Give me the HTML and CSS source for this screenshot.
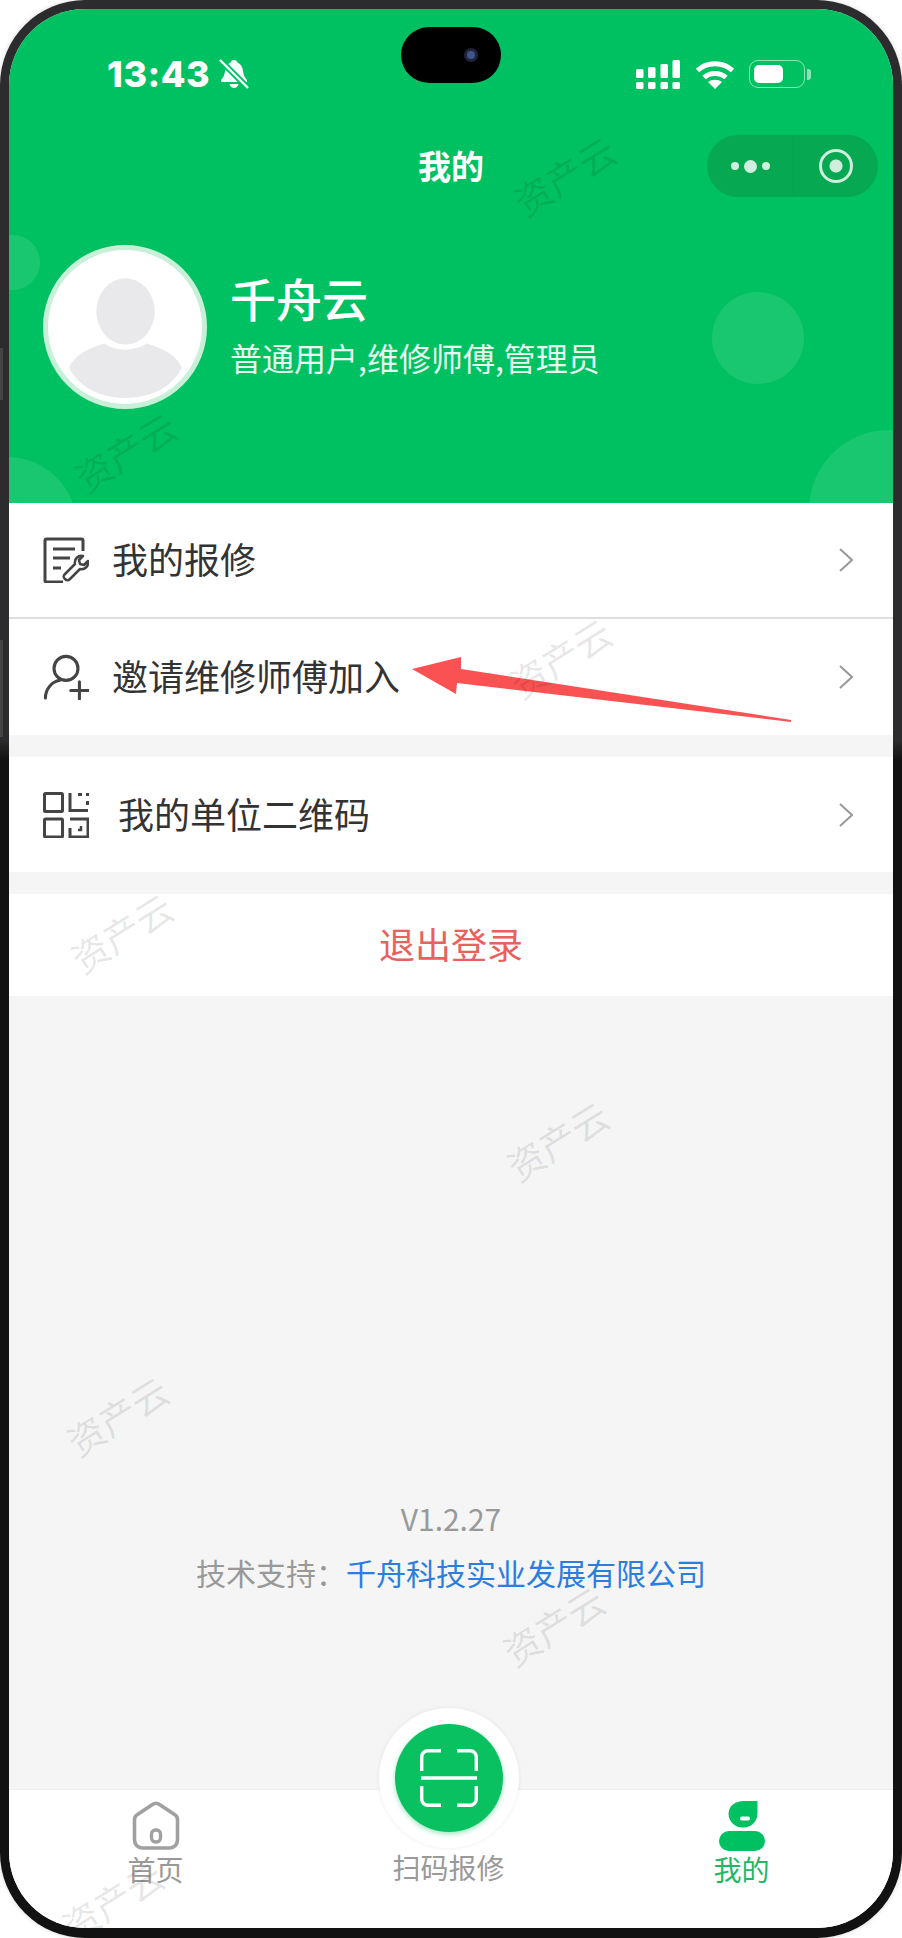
FILE: index.html
```html
<!DOCTYPE html>
<html lang="zh-CN">
<head>
    <meta charset="UTF-8">
    <meta name="viewport" content="width=device-width, initial-scale=1.0">
    <title>我的</title>
    <link rel="stylesheet" href="styles.css">
</head>
<body>

<div class="phone">
    <span class="side-key side-key-a"></span>
    <span class="side-key side-key-b"></span>

    <div class="screen">
        <header class="header">
            <span class="bubble bubble-a"></span>
            <span class="bubble bubble-b"></span>
            <span class="bubble bubble-c"></span>
            <span class="bubble bubble-d"></span>

            <div class="island"><span class="camera"></span></div>

            <div class="status-bar">
                <div class="status-left">
                    <span class="clock">13:43</span>
                    <svg class="bell" viewBox="0 0 30 30">
                        <path d="M15 1c2 0 3 1 3.500 2.500C22 5 23.500 8 24 12c.5 4 1.500 6 4 9v2H2v-2c2.500-3 3.500-5 4-9 .5-4 2-7 5.500-8.500C12 2 13 1 15 1z" fill="#fff"/>
                        <path d="M10.500 25h9c-.5 2.500-2.500 4-4.500 4s-4-1.500-4.500-4z" fill="#fff"/>
                        <path d="M1 1l28 28" stroke="#00c161" stroke-width="6"/>
                        <path d="M1 1l28 28" stroke="#fff" stroke-width="2.400"/>
                    </svg>
                </div>
                <div class="status-right">
                    <svg class="signal" viewBox="0 0 44 29" fill="#fff">
                        <rect x="0" y="9" width="7.500" height="9" rx="1.500"/>
                        <rect x="12" y="7" width="7.500" height="11" rx="1.500"/>
                        <rect x="24.500" y="4" width="7.500" height="14" rx="1.500"/>
                        <rect x="36.500" y="0" width="7.500" height="18" rx="1.500"/>
                        <rect x="0" y="22" width="7.500" height="7" rx="1.500"/>
                        <rect x="12" y="22" width="7.500" height="7" rx="1.500"/>
                        <rect x="24.500" y="22" width="7.500" height="7" rx="1.500"/>
                        <rect x="36.500" y="22" width="7.500" height="7" rx="1.500"/>
                    </svg>
                    <svg class="wifi" viewBox="0 0 40 30" fill="none" stroke="#fff" stroke-width="5">
                        <path d="M2.500 11.500C12 2.500 28 2.500 37.500 11.500"/>
                        <path d="M9 18.500c6-5.500 16-5.500 22 0"/>
                        <path d="M20 30l-7-7c4-3 10-3 14 0z" fill="#fff" stroke="none"/>
                    </svg>
                    <div class="battery">
                        <span class="battery-level"></span>
                    </div>
                    <span class="battery-nub"></span>
                </div>
            </div>

            <div class="nav">
                <h1 class="nav-title">我的</h1>
                <div class="capsule">
                    <div class="capsule-dots">
                        <span class="dot"></span>
                        <span class="dot dot-big"></span>
                        <span class="dot"></span>
                    </div>
                    <div class="capsule-close"><span></span></div>
                </div>
            </div>

            <div class="profile">
                <div class="avatar">
                    <svg viewBox="0 0 153 153" fill="#e9e9eb">
                        <ellipse cx="77" cy="61" rx="29" ry="33"/>
                        <path d="M21 117c6-14 22-20 35-24 12 8 30 8 42 0 13 4 29 10 35 24-10 20-32 30-56 30s-46-10-56-30z"/>
                    </svg>
                </div>
                <div class="profile-info">
                    <div class="profile-name">千舟云</div>
                    <div class="profile-role">普通用户,维修师傅,管理员</div>
                </div>
            </div>
        </header>

        <main class="main">
            <section class="card">
                <div class="row row-line">
                    <svg class="row-icon" viewBox="0 0 46 46" fill="none" stroke="#444" stroke-width="3">
                        <path d="M40 14V3.500A1.500 1.500 0 0 0 38.500 2H3.500A1.500 1.500 0 0 0 2 3.500v40A1.500 1.500 0 0 0 3.500 45H20"/>
                        <path d="M10 12h22M10 21h17M10 31h8"/>
                        <path d="M22 42c-2-2-2-3 0-5l10-10c-1-5 3-9 8-8l-4 4 1 4 4 1 4-4c1 5-3 9-8 8L27 42c-2 2-3 2-5 0z" stroke-width="2.500" stroke-linejoin="round"/>
                    </svg>
                    <span class="row-text">我的报修</span>
                    <svg class="chevron" viewBox="0 0 14 24"><path d="M1 1l12 11L1 23"/></svg>
                </div>
                <div class="row">
                    <svg class="row-icon" viewBox="0 0 46 48" fill="none" stroke="#444" stroke-width="3.200" stroke-linecap="round">
                        <circle cx="23" cy="15" r="12.500"/>
                        <path d="M1.500 46c0-10 7-17 15-18.500"/>
                        <path d="M37 29v18M28 38h18"/>
                    </svg>
                    <span class="row-text">邀请维修师傅加入</span>
                    <svg class="chevron" viewBox="0 0 14 24"><path d="M1 1l12 11L1 23"/></svg>
                </div>
            </section>

            <section class="card">
                <div class="row row-short">
                    <svg class="row-icon" viewBox="0 0 46 46" fill="none" stroke="#444" stroke-width="3">
                        <rect x="1.500" y="1.500" width="18" height="18" rx="1"/>
                        <rect x="1.500" y="27" width="18" height="18" rx="1"/>
                        <path d="M27 1v17.500h18M35 2.500h4M44.500 1v3M44.500 9v4"/>
                        <path d="M27 27h18v18H27v-9M27 45h8"/>
                        <path d="M35 38h3v-4" stroke-width="2.400"/>
                    </svg>
                    <span class="row-text row-text-wide">我的单位二维码</span>
                    <svg class="chevron" viewBox="0 0 14 24"><path d="M1 1l12 11L1 23"/></svg>
                </div>
            </section>

            <section class="card logout">退出登录</section>

            <footer class="about">
                <div class="about-line">V1.2.27</div>
                <div class="about-line">技术支持：<span class="about-link">千舟科技实业发展有限公司</span></div>
            </footer>
        </main>

        <nav class="tabbar">
            <div class="tab">
                <svg class="tab-icon" viewBox="0 0 50 50" fill="none" stroke="#a0a0a0" stroke-width="3.600">
                    <path d="M21.500 3.500a6 6 0 0 1 7 0l15 10a6 6 0 0 1 3 5.500v20a8 8 0 0 1-8 8h-27a8 8 0 0 1-8-8V19a6 6 0 0 1 3-5.500z"/>
                    <rect x="20.500" y="29" width="9" height="12" rx="4" stroke-width="3.400"/>
                </svg>
                <span class="tab-label">首页</span>
            </div>
            <div class="tab">
                <div class="scan-ring">
                    <div class="scan-button">
                        <svg viewBox="0 0 58 58" fill="none" stroke="#fff" stroke-width="3.400">
                            <path d="M21 1.700H8A6.300 6.300 0 0 0 1.700 8v14M37 1.700h13A6.300 6.300 0 0 1 56.300 8v14M21 56.300H8A6.300 6.300 0 0 1 1.700 50V37M37 56.300h13a6.300 6.300 0 0 0 6.300-6.300V37"/>
                            <path d="M1 29h56"/>
                        </svg>
                    </div>
                </div>
                <span class="tab-icon"></span>
                <span class="tab-label tab-label-up">扫码报修</span>
            </div>
            <div class="tab tab-active">
                <svg class="tab-icon" viewBox="0 0 46 50" fill="#00c161">
                    <path d="M25 0h13.500v12.500a14 14 0 0 1-14 14 14 14 0 0 1-15-13.500C9.500 5 16 0 25 0z"/>
                    <rect x="21" y="15.500" width="10" height="4" rx="2" fill="#fff"/>
                    <rect x="0" y="30" width="46" height="20" rx="10"/>
                </svg>
                <span class="tab-label">我的</span>
            </div>
        </nav>

        <svg class="arrow" viewBox="0 0 380 66">
            <path d="M0 12L49 0v12l330 51v2L45 26l-1 11z" fill="#fa5252"/>
        </svg>

        <span class="stamp stamp-1">资产云</span>
        <span class="stamp stamp-2">资产云</span>
        <span class="stamp stamp-3">资产云</span>
        <span class="stamp stamp-4">资产云</span>
        <span class="stamp stamp-5">资产云</span>
        <span class="stamp stamp-6">资产云</span>
        <span class="stamp stamp-7">资产云</span>
        <span class="stamp stamp-8">资产云</span>
    </div>
</div>

</body>
</html>
```

FILE: styles.css
```css
* {
    box-sizing: border-box;
}

body {
    margin: 0;
    background-color: #fff;
    font-family: "Noto Sans CJK SC", "Liberation Sans", sans-serif;
}

.phone {
    position: relative;
    width: 902px;
    height: 1938px;
    padding: 9px 9px 10px;
    border-radius: 85px;
    background: linear-gradient(#2c2c2e 0, #2c2c2e 740px, #121212 760px);
    box-shadow: 0 0 5px rgba(0, 0, 0, 0.15);
}

.side-key {
    position: absolute;
    left: 0;
    width: 3px;
    background-color: #444;
}

.side-key-a {
    top: 348px;
    height: 52px;
}

.side-key-b {
    top: 640px;
    height: 97px;
}

.screen {
    position: relative;
    display: flex;
    flex-direction: column;
    height: 100%;
    overflow: hidden;
    border-radius: 76px;
    background-color: #f5f5f5;
}

/* green top part */
.header {
    position: relative;
    height: 494px;
    overflow: hidden;
    background-color: #00c161;
}

.bubble {
    position: absolute;
    border-radius: 50%;
    background-color: rgba(255, 255, 255, 0.1);
}

.bubble-a {
    left: -24px;
    top: 226px;
    width: 55px;
    height: 55px;
}

.bubble-b {
    left: 703px;
    top: 283px;
    width: 92px;
    height: 92px;
}

.bubble-c {
    left: 800px;
    top: 421px;
    width: 160px;
    height: 160px;
}

.bubble-d {
    left: -72px;
    top: 448px;
    width: 140px;
    height: 140px;
}

.island {
    position: absolute;
    left: 392px;
    top: 18px;
    width: 100px;
    height: 56px;
    border-radius: 28px;
    background-color: #000;
}

.camera {
    position: absolute;
    left: 63px;
    top: 21px;
    width: 14px;
    height: 14px;
    border-radius: 50%;
    border: 3px solid #20233a;
    background-color: #3f5488;
}

.status-bar {
    display: flex;
    align-items: center;
    justify-content: space-between;
    height: 126px;
    padding: 4px 82px 0 98px;
}

.status-left {
    display: flex;
    align-items: center;
    gap: 9px;
}

.clock {
    font-family: Inter, "Liberation Sans", sans-serif;
    font-size: 36px;
    font-weight: 800;
    letter-spacing: 0.5px;
    color: #fff;
}

.bell {
    width: 30px;
    height: 30px;
}

.status-right {
    display: flex;
    align-items: center;
}

.signal {
    width: 44px;
    height: 29px;
    margin-right: 15px;
}

.wifi {
    width: 40px;
    height: 30px;
    margin-right: 14px;
}

.battery {
    width: 56px;
    height: 28px;
    padding: 4px;
    border: 1.500px solid rgba(255, 255, 255, 0.55);
    border-radius: 9px;
}

.battery-level {
    display: block;
    width: 29px;
    height: 100%;
    border-radius: 5px;
    background-color: #fff;
}

.battery-nub {
    width: 4px;
    height: 11px;
    margin-left: 2px;
    border-radius: 0 3px 3px 0;
    background-color: rgba(255, 255, 255, 0.55);
}

.nav {
    position: relative;
    display: flex;
    justify-content: flex-end;
    align-items: center;
    height: 62px;
    padding-right: 15px;
}

.nav-title {
    position: absolute;
    left: 0;
    right: 0;
    margin: 0 0 2px;
    text-align: center;
    font-size: 33px;
    font-weight: 700;
    color: #fff;
}

.capsule {
    display: flex;
    width: 171px;
    height: 62px;
    border-radius: 31px;
    background-color: #06a851;
}

.capsule-dots {
    display: flex;
    align-items: center;
    justify-content: center;
    gap: 5px;
    width: 87px;
    border-right: 1px solid #0b9f4f;
}

.dot {
    width: 8px;
    height: 8px;
    border-radius: 50%;
    background-color: #cfeedd;
}

.dot-big {
    width: 13px;
    height: 13px;
}

.capsule-close {
    display: flex;
    align-items: center;
    justify-content: center;
    flex: 1;
}

.capsule-close span {
    width: 34px;
    height: 34px;
    border: 3px solid #cfeedd;
    border-radius: 50%;
    background: radial-gradient(circle, #cfeedd 0 6px, transparent 7px);
}

.profile {
    display: flex;
    align-items: center;
    gap: 23px;
    margin-top: 48px;
    padding-left: 34px;
}

.avatar {
    width: 164px;
    height: 164px;
    padding: 0;
    border: 5.500px solid #c8f0d8;
    border-radius: 50%;
    overflow: hidden;
    background-color: #fff;
}

.avatar svg {
    display: block;
    width: 100%;
    height: 100%;
}

.profile-info {
    padding-bottom: 8px;
}

.profile-name {
    font-size: 46px;
    font-weight: 500;
    line-height: 60px;
    color: #fff;
}

.profile-role {
    margin-top: 8px;
    font-size: 32px;
    line-height: 44px;
    color: #e6f9ee;
}

/* list part */
.main {
    display: flex;
    flex-direction: column;
    flex: 1;
    gap: 22px;
}

.card {
    background-color: #fff;
}

.row {
    display: flex;
    align-items: center;
    height: 116px;
    padding: 0 40px 0 34px;
}

.row-line {
    border-bottom: 2px solid #dedede;
}

.row-short {
    height: 115px;
}

.row-icon {
    flex-shrink: 0;
    width: 46px;
    height: 46px;
}

.row-text {
    flex: 1;
    margin-left: 23px;
    padding-bottom: 4px;
    font-size: 36px;
    color: #333;
}

.row-text-wide {
    margin-left: 29px;
}

.chevron {
    width: 14px;
    height: 24px;
    fill: none;
    stroke: #999;
    stroke-width: 2;
}

.logout {
    height: 102px;
    line-height: 98px;
    text-align: center;
    font-size: 36px;
    color: #e9605c;
}

.about {
    display: flex;
    flex-direction: column;
    gap: 10px;
    margin-top: auto;
    padding-bottom: 195px;
    text-align: center;
}

.about-line {
    font-size: 30px;
    line-height: 44px;
    color: #999;
}

.about-link {
    color: #2b7de0;
}

/* bottom tabs */
.tabbar {
    display: grid;
    grid-template-columns: repeat(3, 293px);
    height: 139px;
    padding-top: 11px;
    border-top: 1px solid #eee;
    background-color: #fff;
}

.tab {
    position: relative;
    display: flex;
    flex-direction: column;
    align-items: center;
}

.tab-icon {
    display: block;
    width: 50px;
    height: 50px;
}

.tab-label {
    font-size: 28px;
    line-height: 36px;
    color: #999;
}

.tab-label-up {
    margin-top: -2px;
}

.tab-active .tab-label {
    color: #1fb866;
}

.scan-ring {
    position: absolute;
    left: 50%;
    top: -93px;
    display: flex;
    align-items: center;
    justify-content: center;
    width: 140px;
    height: 140px;
    margin-left: -70px;
    border-radius: 50%;
    background-color: #fff;
    box-shadow: 0 0 4px rgba(0, 0, 0, 0.08);
}

.scan-button {
    display: flex;
    align-items: center;
    justify-content: center;
    width: 108px;
    height: 108px;
    border-radius: 50%;
    background-color: #0ac162;
    box-shadow: 0 2px 5px rgba(10, 193, 98, 0.4);
}

.scan-button svg {
    width: 58px;
    height: 58px;
}

/* hand drawn pointer on the second row */
.arrow {
    position: absolute;
    left: 403px;
    top: 648px;
    width: 380px;
    height: 66px;
}

/* repeated name across the page */
.stamp {
    position: absolute;
    font-size: 37px;
    line-height: 40px;
    white-space: nowrap;
    color: rgba(0, 0, 0, 0.1);
    transform: translate(-50%, -50%) rotate(-32deg);
}

.stamp-1 {
    left: 555px;
    top: 166px;
}

.stamp-2 {
    left: 116px;
    top: 442px;
}

.stamp-3 {
    left: 551px;
    top: 648px;
}

.stamp-4 {
    left: 112px;
    top: 923px;
}

.stamp-5 {
    left: 548px;
    top: 1131px;
}

.stamp-6 {
    left: 108px;
    top: 1406px;
}

.stamp-7 {
    left: 544px;
    top: 1616px;
}

.stamp-8 {
    left: 103px;
    top: 1891px;
}
```
